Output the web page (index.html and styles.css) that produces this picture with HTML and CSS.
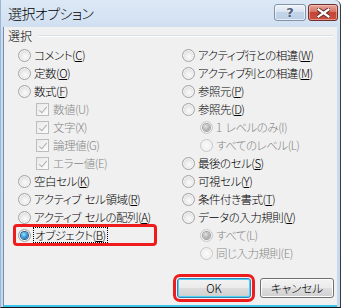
FILE: index.html
```html
<!DOCTYPE html>
<html lang="ja">
<head>
<meta charset="utf-8">
<title>選択オプション</title>
<link rel="stylesheet" href="styles.css">
</head>
<body>
<div class="window">
  <div class="titlebar">
    <span class="title">選択オプション</span>
    <div class="caption-btns">
      <span class="cbtn help">?</span>
      <span class="cbtn close">
        <svg width="13" height="10" viewBox="0 0 13 10"><path d="M1.5 1.5 L11.5 8.5 M11.5 1.5 L1.5 8.5" stroke="#5a2a25" stroke-width="4" stroke-linecap="square" fill="none"/><path d="M1.5 1.5 L11.5 8.5 M11.5 1.5 L1.5 8.5" stroke="#fff" stroke-width="2.2" stroke-linecap="square" fill="none"/></svg>
      </span>
    </div>
  </div>
  <div class="client">
    <div class="group-head"><span class="legend">選択</span><span class="rule"></span></div>
    <div class="cols">
      <div class="col">
        <div class="row"><span class="radio"></span><span>コメント(<u>C</u>)</span></div>
        <div class="row"><span class="radio"></span><span>定数(<u>O</u>)</span></div>
        <div class="row"><span class="radio"></span><span>数式(<u>F</u>)</span></div>
        <div class="row sub dis"><span class="check"></span><span>数値(U)</span></div>
        <div class="row sub dis"><span class="check"></span><span>文字(X)</span></div>
        <div class="row sub dis"><span class="check"></span><span>論理値(G)</span></div>
        <div class="row sub dis"><span class="check"></span><span>エラー値(E)</span></div>
        <div class="row"><span class="radio"></span><span>空白セル(<u>K</u>)</span></div>
        <div class="row"><span class="radio"></span><span>アクティブ セル領域(<u>R</u>)</span></div>
        <div class="row"><span class="radio"></span><span>アクティブ セルの配列(<u>A</u>)</span></div>
        <div class="row mark"><span class="radio on"></span><span class="focus">オブジェクト(<u>B</u>)</span></div>
      </div>
      <div class="col">
        <div class="row"><span class="radio"></span><span>アクティブ行との相違(<u>W</u>)</span></div>
        <div class="row"><span class="radio"></span><span>アクティブ列との相違(<u>M</u>)</span></div>
        <div class="row"><span class="radio"></span><span>参照元(<u>P</u>)</span></div>
        <div class="row"><span class="radio"></span><span>参照先(<u>D</u>)</span></div>
        <div class="row sub dis"><span class="radio on"></span><span>1 レベルのみ(I)</span></div>
        <div class="row sub dis"><span class="radio"></span><span>すべてのレベル(L)</span></div>
        <div class="row"><span class="radio"></span><span>最後のセル(<u>S</u>)</span></div>
        <div class="row"><span class="radio"></span><span>可視セル(<u>Y</u>)</span></div>
        <div class="row"><span class="radio"></span><span>条件付き書式(<u>T</u>)</span></div>
        <div class="row"><span class="radio"></span><span>データの入力規則(<u>V</u>)</span></div>
        <div class="row sub dis"><span class="radio on"></span><span>すべて(L)</span></div>
        <div class="row sub dis"><span class="radio"></span><span>同じ入力規則(E)</span></div>
      </div>
    </div>
    <div class="btn-row">
      <span class="btn default">OK</span>
      <span class="btn">キャンセル</span>
    </div>
  </div>
</div>
</body>
</html>
```

FILE: styles.css
```css
html, body {
  margin: 0;
  padding: 0;
  background: #ffffff;
}
body {
  font-family: "Noto Sans CJK JP", "Noto Sans", sans-serif;
  font-size: 11.5px;
  font-weight: 300;
  letter-spacing: -0.5px;
  word-spacing: 2px;
  font-feature-settings: "palt";
  color: #000;
}
.window {
  width: 341px;
  height: 308px;
  box-sizing: border-box;
  display: flex;
  flex-direction: column;
  background: linear-gradient(#dce8f5, #cbdcef 40px, #c6d8ed);
  border-right: 1px solid #3a3a3a;
  border-bottom: 1px solid #111;
  border-left: 1px solid #9cb5d2;
  border-top-right-radius: 6px;
}
.titlebar {
  height: 27px;
  flex: none;
  display: flex;
  align-items: flex-start;
  padding-left: 7px;
}
.title {
  font-size: 14px;
  line-height: 27px;
  letter-spacing: -0.6px;
}
.caption-btns {
  margin-left: auto;
  margin-right: 2px;
  margin-top: 4px;
  display: flex;
  gap: 2px;
}
.cbtn {
  height: 17px;
  box-sizing: border-box;
  border-radius: 3px;
  display: flex;
  align-items: center;
  justify-content: center;
  letter-spacing: 0;
}
.help {
  width: 32px;
  border: 1px solid #8293a9;
  background: linear-gradient(#eef3f9, #dae5f1 45%, #c3d4e8 50%, #bcd0e6);
  box-shadow: inset 0 0 0 1px rgba(255,255,255,0.6);
  color: #52627a;
  font-family: "DejaVu Sans", sans-serif;
  font-weight: bold;
  font-size: 13px;
  text-shadow: 0 0 2px #fff;
}
.close {
  width: 30px;
  border: 1px solid #703029;
  background: linear-gradient(#e4a69c, #d77565 45%, #c64536 50%, #c9503f);
  box-shadow: inset 0 0 0 1px rgba(255,220,210,0.5);
}
.client {
  flex: 1;
  margin: 0 3px 0 2px;
  background: #f0f0f0;
  border-left: 1px solid #6f8fb5;
  border-bottom: 2px solid #3ec3ec;
  display: flex;
  flex-direction: column;
  padding: 2px 0 0 4px;
}
.group-head {
  height: 14px;
  line-height: 14px;
  display: flex;
  align-items: center;
}
.legend {
  font-size: 12px;
  letter-spacing: 0;
}
.rule {
  flex: 1;
  height: 1px;
  background: #d5dfe5;
  border-bottom: 1px solid #fff;
  margin: 0 4px 0 6px;
}
.cols {
  margin-top: 3px;
  display: grid;
  grid-template-columns: 164px 164px;
}
.col {
  padding-left: 10px;
  display: flex;
  flex-direction: column;
}
.row {
  height: 18px;
  display: flex;
  align-items: center;
  gap: 3px;
  white-space: nowrap;
}
.row.sub {
  padding-left: 18px;
}
.row.dis {
  color: #858585;
}
.row u {
  text-decoration-thickness: 1px;
  text-underline-offset: 1px;
}
.radio {
  width: 13px;
  height: 13px;
  box-sizing: border-box;
  border-radius: 50%;
  border: 1px solid #a4a4a4;
  background: radial-gradient(circle at 55% 60%, #fbfbfb 0, #eeeeee 35%, #d9d9d9 75%, #cfcfcf 100%);
  box-shadow: inset 0 0 0 1px #f4f4f4;
  flex: none;
  display: flex;
  align-items: center;
  justify-content: center;
}
.radio.on::after {
  content: "";
  width: 7px;
  height: 7px;
  border-radius: 50%;
  background: radial-gradient(circle at 40% 35%, #9fe3ff 0, #3aa0dd 45%, #0b4f8d 100%);
  box-shadow: 0 0 0 1px #2b5f8e;
}
.dis .radio {
  border-color: #c8c8c8;
  background: radial-gradient(circle at 50% 50%, #fcfcfc, #efefef 60%, #e4e4e4);
}
.dis .radio.on::after {
  background: radial-gradient(circle at 40% 35%, #e2e2e2 0, #b0b0b0 60%, #959595 100%);
  box-shadow: 0 0 0 1px #a3a3a3;
}
.check {
  width: 13px;
  height: 13px;
  box-sizing: border-box;
  border: 1px solid #bdbdbd;
  background: linear-gradient(135deg, #e9e9e9, #fbfbfb);
  flex: none;
  position: relative;
  margin-right: 1px;
}
.check::after {
  content: "";
  position: absolute;
  left: 4px;
  top: 1px;
  width: 3px;
  height: 7px;
  border: solid #b0b0b0;
  border-width: 0 1.5px 1.5px 0;
  transform: rotate(40deg);
}
.row.mark {
  width: 138px;
  height: 16px;
  margin: 1px 0 1px -2px;
  padding-left: 2px;
  box-sizing: border-box;
  outline: 3px solid #ee1c1c;
  border-radius: 1px;
}
.focus {
  outline: 1px dotted #000;
  padding: 0 1px;
  line-height: 14px;
}
.btn-row {
  margin-top: 16px;
  display: flex;
  justify-content: flex-end;
  gap: 9px;
  padding-right: 3px;
}
.btn {
  width: 74px;
  height: 20px;
  box-sizing: border-box;
  border: 1px solid #707070;
  border-radius: 3px;
  background: linear-gradient(#f3f3f3, #ebebeb 48%, #dddddd 52%, #cfcfcf);
  box-shadow: inset 0 0 0 1px #fcfcfc;
  display: flex;
  align-items: center;
  justify-content: center;
  line-height: 18px;
  letter-spacing: 0;
}
.btn.default {
  border-color: #3c7fb1;
  box-shadow: inset 0 0 0 1px #48d5f6;
  outline: 3px solid #ee1c1c;
  outline-offset: 1px;
}
```
